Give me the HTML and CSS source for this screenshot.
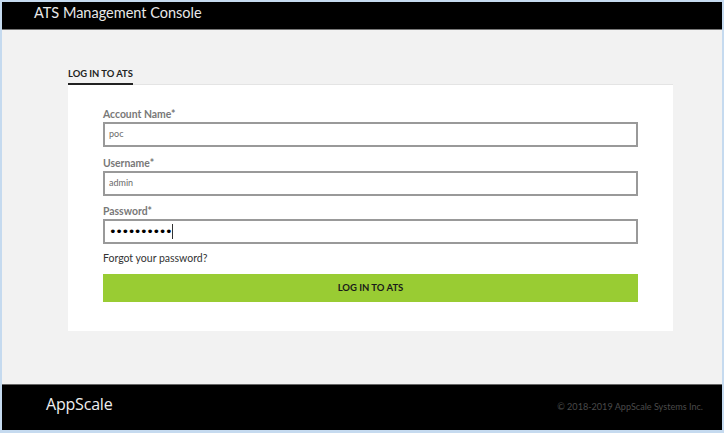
FILE: index.html
```html
<!DOCTYPE html>
<html lang="en">
<head>
<meta charset="utf-8">
<title>ATS Management Console</title>
<link rel="stylesheet" href="styles.css">
</head>
<body>
<div class="window">
  <header class="topbar">ATS Management Console</header>
  <main class="content">
    <div class="tabs"><span class="tab">LOG IN TO ATS</span></div>
    <form class="card">
      <div class="field">
        <label class="label">Account Name*</label>
        <div class="input">poc</div>
      </div>
      <div class="field">
        <label class="label">Username*</label>
        <div class="input">admin</div>
      </div>
      <div class="field">
        <label class="label">Password*</label>
        <div class="input input-password"><span class="dots">••••••••••</span><span class="caret"></span></div>
      </div>
      <a class="forgot">Forgot your password?</a>
      <div class="button">LOG IN TO ATS</div>
    </form>
  </main>
  <footer class="footer">
    <span class="logo">AppScale</span>
    <span class="copyright">© 2018-2019 AppScale Systems Inc.</span>
  </footer>
</div>
</body>
</html>
```
FILE: styles.css
```css
* { box-sizing: border-box; }
html, body { margin: 0; padding: 0; height: 100%; }
body { font-family: Lato, "Liberation Sans", sans-serif; background: #c5daef; overflow: hidden; }
.window {
  height: 433px;
  padding: 2px 2px 3px 2px;
  display: flex;
  flex-direction: column;
}
.topbar {
  height: 28px;
  flex: none;
  background: #000;
  border-bottom: 1px solid #777;
  color: #e8e8e8;
  font-size: 14.5px;
  line-height: 21px;
  padding-left: 32px;
}
.content {
  flex: 1;
  background: #f2f2f2;
  padding: 35px 49px 0 66px;
}
.tabs { display: flex; height: 20px; border-bottom: 1px solid #e4e4e4; }
.tab {
  width: 65px;
  height: 20px;
  border-bottom: 2px solid #222;
  font-size: 9.4px;
  font-weight: 700;
  line-height: 17px;
  color: #222;
  white-space: nowrap;
}
.card {
  background: #fff;
  height: 246px;
  padding: 22px 35px 0 35px;
  display: flex;
  flex-direction: column;
}
.field { height: 48.7px; flex: none; }
.label {
  display: block;
  height: 15px;
  font-size: 10.4px;
  line-height: 14px;
  color: #787878;
  font-weight: 700;
}
.input {
  height: 25px;
  border: 2px solid #999;
  font-size: 9px;
  line-height: 19px;
  padding-left: 4px;
  color: #6a6a6a;
  background: #fff;
}
.input-password { display: flex; align-items: center; color: #000; }
.dots { font-family: "DejaVu Sans", sans-serif; font-size: 13px; letter-spacing: -1.45px; line-height: 21px; }
.caret { width: 1px; height: 15px; margin-left: 1px; background: #333; }
.forgot {
  display: block;
  margin-top: -2px;
  height: 14px;
  font-size: 10.5px;
  line-height: 14px;
  color: #333;
}
.button {
  margin-top: 9px;
  height: 28px;
  background: #99cc33;
  color: #1a1a1a;
  font-size: 9.5px;
  font-weight: 700;
  line-height: 28px;
  text-align: center;
}
.footer {
  height: 46px;
  flex: none;
  background: #000;
  border-top: 1px solid #666;
  display: flex;
  justify-content: space-between;
  align-items: center;
  padding: 0 19px 8px 44px;
}
.logo { color: #eee; font-size: 16px; font-family: "Open Sans", sans-serif; letter-spacing: -0.2px; }
.copyright { color: #4a4a4a; font-size: 9.1px; padding-top: 5px; }
```
